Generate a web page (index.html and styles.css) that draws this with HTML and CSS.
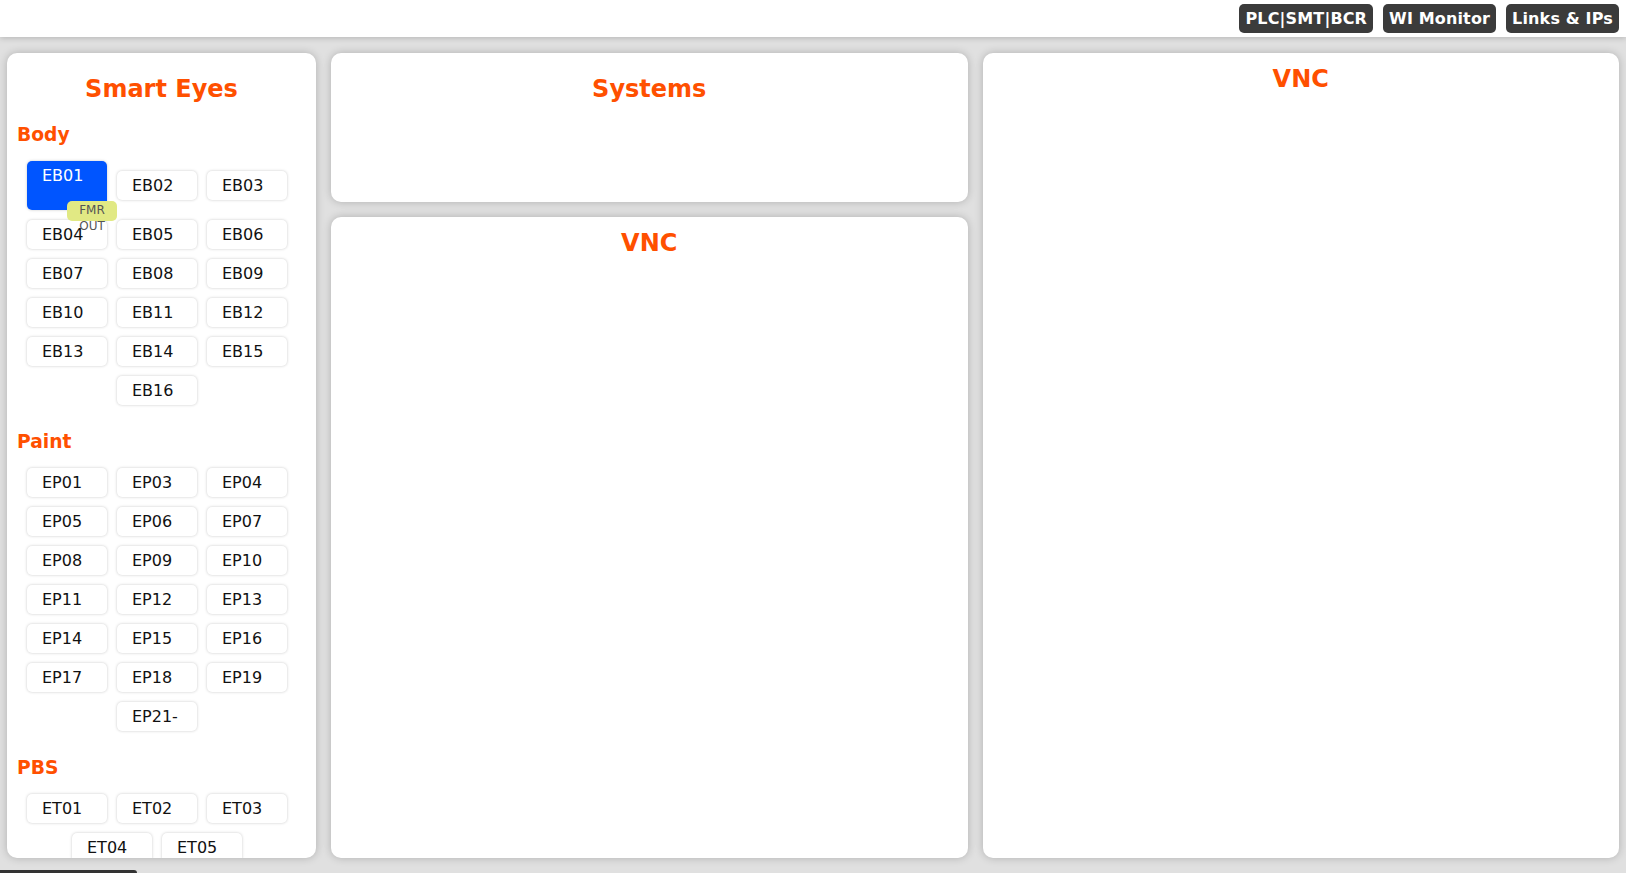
FILE: index.html
```html
<!DOCTYPE html>
<html lang="en">
<head>
<meta charset="utf-8">
<title>Smart Eyes</title>
<link rel="stylesheet" href="styles.css">
</head>
<body>
<header class="topbar">
  <a class="top-btn">PLC|SMT|BCR</a>
  <a class="top-btn">WI Monitor</a>
  <a class="top-btn">Links &amp; IPs</a>
</header>
<main class="main">
  <section class="card side">
    <h2 class="title title-lg">Smart Eyes</h2>
    <h3 class="group-title">Body</h3>
    <div class="btns">
      <button class="cam cam-active">EB01<span class="badge">FMR OUT</span></button>
      <button class="cam">EB02</button>
      <button class="cam">EB03</button>
      <button class="cam">EB04</button>
      <button class="cam">EB05</button>
      <button class="cam">EB06</button>
      <button class="cam">EB07</button>
      <button class="cam">EB08</button>
      <button class="cam">EB09</button>
      <button class="cam">EB10</button>
      <button class="cam">EB11</button>
      <button class="cam">EB12</button>
      <button class="cam">EB13</button>
      <button class="cam">EB14</button>
      <button class="cam">EB15</button>
      <button class="cam">EB16</button>
    </div>
    <h3 class="group-title">Paint</h3>
    <div class="btns">
      <button class="cam">EP01</button>
      <button class="cam">EP03</button>
      <button class="cam">EP04</button>
      <button class="cam">EP05</button>
      <button class="cam">EP06</button>
      <button class="cam">EP07</button>
      <button class="cam">EP08</button>
      <button class="cam">EP09</button>
      <button class="cam">EP10</button>
      <button class="cam">EP11</button>
      <button class="cam">EP12</button>
      <button class="cam">EP13</button>
      <button class="cam">EP14</button>
      <button class="cam">EP15</button>
      <button class="cam">EP16</button>
      <button class="cam">EP17</button>
      <button class="cam">EP18</button>
      <button class="cam">EP19</button>
      <button class="cam">EP21-</button>
    </div>
    <h3 class="group-title">PBS</h3>
    <div class="btns">
      <button class="cam">ET01</button>
      <button class="cam">ET02</button>
      <button class="cam">ET03</button>
      <button class="cam">ET04</button>
      <button class="cam">ET05</button>
    </div>
  </section>
  <div class="middle">
    <section class="card systems">
      <h2 class="title title-lg">Systems</h2>
    </section>
    <section class="card vnc">
      <h2 class="title">VNC</h2>
    </section>
  </div>
  <section class="card vnc">
    <h2 class="title">VNC</h2>
  </section>
</main>
<div class="hscroll"></div>
</body>
</html>
```
FILE: styles.css
```css
html, body {
  margin: 0;
  padding: 0;
  height: 100%;
}
body {
  font-family: "DejaVu Sans", Verdana, sans-serif;
  background: #e0e0e0;
  overflow: hidden;
  color: #111;
}
.topbar {
  height: 37px;
  background: #fff;
  display: flex;
  justify-content: flex-end;
  align-items: flex-start;
  gap: 10px;
  padding: 4px 7px 0 0;
  box-sizing: border-box;
  box-shadow: 0 1px 6px rgba(0,0,0,0.2);
  position: relative;
  z-index: 1;
}
.top-btn {
  display: block;
  height: 29px;
  line-height: 29px;
  padding: 0 6px;
  background: #3b3b3b;
  color: #fff;
  font-weight: bold;
  font-size: 16px;
  letter-spacing: 0.15px;
  border-radius: 5px;
  white-space: nowrap;
}
.main {
  display: grid;
  grid-template-columns: 309px 1fr 1fr;
  column-gap: 15px;
  padding: 16px 7px 15px 7px;
  height: calc(100vh - 37px);
  box-sizing: border-box;
}
.card {
  background: #fff;
  border-radius: 10px;
  box-shadow: 0 0 9px rgba(0,0,0,0.22);
  min-height: 0;
}
.side {
  overflow: hidden;
  padding: 0 10px;
}
.middle {
  display: flex;
  flex-direction: column;
  gap: 15px;
  min-height: 0;
}
.systems {
  height: 149px;
  flex: none;
}
.vnc {
  flex: 1;
}
.title {
  margin: 0;
  padding-top: 12px;
  text-align: center;
  color: #ff5000;
  font-size: 24px;
  font-weight: bold;
  line-height: normal;
}
.title-lg {
  padding-top: 22px;
}
.group-title {
  margin: 21px 0 11px;
  color: #ff5000;
  font-size: 18.72px;
  font-weight: bold;
  line-height: normal;
}
.btns {
  display: flex;
  flex-wrap: wrap;
  justify-content: center;
  align-items: center;
  margin-right: 9px;
}
.cam {
  position: relative;
  width: 80px;
  height: 29px;
  margin: 5px;
  padding: 0 0 0 15px;
  border: none;
  border-radius: 5px;
  background: #fff;
  box-shadow: 0 0 3px rgba(0,0,0,0.22);
  font-family: "DejaVu Sans", Verdana, sans-serif;
  font-size: 16px;
  line-height: 29px;
  color: #111;
  text-align: left;
  box-sizing: border-box;
  vertical-align: top;
}
.cam-active {
  height: 49px;
  background: #0055ff;
  color: #fff;
  padding-bottom: 20px;
}
.badge {
  position: absolute;
  left: 40px;
  top: 40px;
  width: 50px;
  height: 20px;
  background: #e1e984;
  border-radius: 5px;
  color: #555;
  font-size: 12px;
  line-height: 16px;
  text-align: center;
  padding-top: 1px;
  box-sizing: border-box;
  z-index: 2;
}
.hscroll {
  position: fixed;
  left: 0;
  bottom: 0;
  width: 137px;
  height: 3px;
  background: #333;
  border-top-right-radius: 3px;
}
```
